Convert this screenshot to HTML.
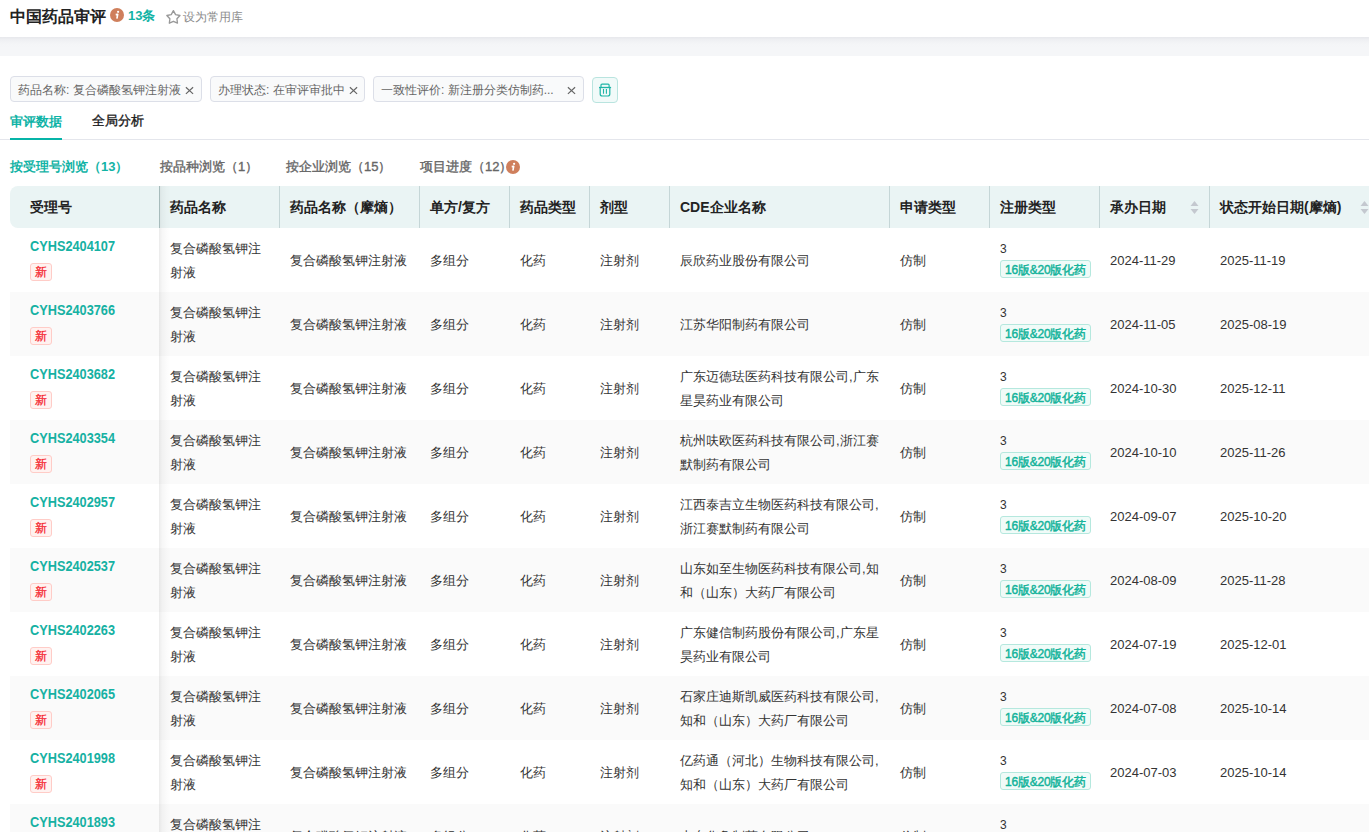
<!DOCTYPE html>
<html><head><meta charset="utf-8">
<style>
*{box-sizing:border-box;margin:0;padding:0}
html,body{width:1369px;height:832px;overflow:hidden;background:#fff}
body{font-family:"Liberation Sans",sans-serif;color:#333;position:relative}
.a{position:absolute;white-space:nowrap}
.band{position:absolute;left:0;top:37px;width:1369px;height:19px;background:linear-gradient(#e7e8ec 0px,#eff0f3 3px,#f4f5f7 7px,#f5f6f8 10px)}
.title{left:10px;top:6px;font-size:16px;font-weight:bold;color:#222;line-height:22px}
.info{width:14px;height:14px;border-radius:50%;background:#d08462;color:#fff;font-size:10px;font-style:italic;font-weight:bold;text-align:center;line-height:14px;font-family:"Liberation Serif",serif}
.cnt{left:128px;top:6px;font-size:13px;font-weight:bold;color:#12b3a5;line-height:20px}
.fav{left:183px;top:7px;font-size:12px;color:#8c8c8c;line-height:20px}
.tag{position:absolute;top:76px;height:26px;border:1px solid #dcdfe8;border-radius:4px;background:#f9fafb;font-size:12px;color:#666;line-height:27px;padding-left:7px;white-space:nowrap}
.tag .x{position:absolute;top:0;font-size:14px;color:#666}
.trash{position:absolute;left:592px;top:77px;width:26px;height:26px;border:1px solid #b9e4df;border-radius:4px;background:#f1faf9}
.tab{top:111px;font-size:13px;line-height:20px;font-weight:bold;color:#222}
.tabline{position:absolute;left:0;top:139px;width:1369px;height:1px;background:#e4e6ec}
.uline{position:absolute;left:10px;top:138px;width:52px;height:2px;background:#06b4a8}
.sub{top:157px;font-size:13px;line-height:20px;color:#666;-webkit-text-stroke:0.35px #666}
.sub.on{font-weight:bold;-webkit-text-stroke:0;color:#12b3a5}
.thead{position:absolute;left:10px;top:186px;width:1400px;height:42px;background:#eaf4f4;border-radius:8px 0 0 8px}
.th{top:196px;font-size:14px;font-weight:bold;color:#222;line-height:22px}
.vl{position:absolute;top:186px;width:1px;height:42px;background:#c5d6d7}
.row{position:absolute;left:10px;width:1400px;height:64px}
.row.g{background:#fafafa}
.shadow{position:absolute;left:159px;top:186px;width:12px;height:646px;background:linear-gradient(90deg,rgba(0,0,0,.08),rgba(0,0,0,.035) 3px,rgba(0,0,0,.01) 8px,rgba(0,0,0,0));}
.td{font-size:13px;color:#333;line-height:24px}
.id{font-size:14px;font-weight:bold;color:#16b1a3;line-height:20px;transform:scaleX(0.91);transform-origin:0 0}
.new{position:absolute;width:22px;height:18px;border:1px solid #ffccc7;border-radius:3px;background:#fff2f0;color:#f5222d;font-size:12px;line-height:16px;text-align:center;-webkit-text-stroke:0.25px #f5222d}
.reg{position:absolute;height:18px;width:91px;border:1px solid #b5e8de;border-radius:3px;background:#f0fbf8;color:#13b39a;font-size:12px;line-height:18px;padding-left:4px;letter-spacing:-0.2px;-webkit-text-stroke:0.45px #13b39a;white-space:nowrap}
.sort{position:absolute;top:200px;width:9px;height:15px}
</style></head><body>
<div class="a title">中国药品审评</div>
<svg class="a" style="left:110px;top:8px" width="14" height="14" viewBox="0 0 14 14"><circle cx="7" cy="7" r="7" fill="#cf7f5c"/><circle cx="8.1" cy="3.8" r="1.1" fill="#fff"/><path d="M5.7 6.6L7.7 6.4L6.9 10.7" stroke="#fff" stroke-width="1.6" fill="none" stroke-linejoin="round"/></svg>
<div class="a cnt">13条</div>
<svg class="a" style="left:165px;top:9px" width="17" height="17" viewBox="0 0 17 17"><path d="M8.40 1.70L10.57 5.61L14.96 6.47L11.92 9.74L12.46 14.18L8.40 12.30L4.34 14.18L4.88 9.74L1.84 6.47L6.23 5.61Z" fill="none" stroke="#999" stroke-width="1.35" stroke-linejoin="round"/></svg>
<div class="a fav">设为常用库</div>
<div class="band"></div>

<div class="tag" style="left:10px;width:192px">药品名称: 复合磷酸氢钾注射液</div>
<div class="tag" style="left:210px;width:155px">办理状态: 在审评审批中</div>
<div class="tag" style="left:373px;width:211px">一致性评价: 新注册分类仿制药...</div>
<div class="trash"><svg width="24" height="24" viewBox="0 0 24 24" style="position:absolute;left:0;top:0" fill="none" stroke="#1fb5a7"><path d="M8 9.3V7.1q0-1 1-1h6.1q1 0 1 1v2.2" stroke-width="1.2"/><path d="M6 9.5H18.1" stroke-width="1.3"/><path d="M7.2 9.5V16q0 2 2 2h5.6q2 0 2-2V9.5" stroke-width="1.2"/><path d="M10.5 11v4.8M13.4 11v4.8" stroke-width="1.1"/></svg></div>
<svg class="a" style="left:185px;top:86px" width="9" height="9" viewBox="0 0 9 9"><path d="M.9 1.2L8.1 7.9M8.1 1.2L.9 7.9" stroke="#666" stroke-width="1.2"/></svg>
<svg class="a" style="left:349px;top:86px" width="9" height="9" viewBox="0 0 9 9"><path d="M.9 1.2L8.1 7.9M8.1 1.2L.9 7.9" stroke="#666" stroke-width="1.2"/></svg>
<svg class="a" style="left:567px;top:86px" width="9" height="9" viewBox="0 0 9 9"><path d="M.9 1.2L8.1 7.9M8.1 1.2L.9 7.9" stroke="#666" stroke-width="1.2"/></svg>

<div class="a tab" style="left:10px;top:112px;color:#0fb3a6">审评数据</div>
<div class="a tab" style="left:92px;font-weight:normal;color:#1a1a1a;-webkit-text-stroke:0.35px #1a1a1a">全局分析</div>
<div class="tabline"></div>
<div class="uline"></div>

<div class="a sub on" style="left:10px">按受理号浏览（13）</div>
<div class="a sub" style="left:160px">按品种浏览（1）</div>
<div class="a sub" style="left:286px">按企业浏览（15）</div>
<div class="a sub" style="left:420px">项目进度（12）</div>
<svg class="a" style="left:506px;top:160px" width="14" height="14" viewBox="0 0 14 14"><circle cx="7" cy="7" r="7" fill="#cf7f5c"/><circle cx="8.1" cy="3.8" r="1.1" fill="#fff"/><path d="M5.7 6.6L7.7 6.4L6.9 10.7" stroke="#fff" stroke-width="1.6" fill="none" stroke-linejoin="round"/></svg>

<div class="thead"></div>
<div class="a th" style="left:30px">受理号</div>
<div class="a th" style="left:170px">药品名称</div>
<div class="a th" style="left:290px">药品名称（摩熵）</div>
<div class="a th" style="left:430px">单方/复方</div>
<div class="a th" style="left:520px">药品类型</div>
<div class="a th" style="left:600px">剂型</div>
<div class="a th" style="left:680px">CDE企业名称</div>
<div class="a th" style="left:900px">申请类型</div>
<div class="a th" style="left:1000px">注册类型</div>
<div class="a th" style="left:1110px">承办日期</div>
<div class="a th" style="left:1220px">状态开始日期(摩熵)</div>
<div class="vl" style="left:159px;background:#b3c9c9"></div>
<div class="vl" style="left:279px"></div>
<div class="vl" style="left:419px"></div>
<div class="vl" style="left:509px"></div>
<div class="vl" style="left:589px"></div>
<div class="vl" style="left:669px"></div>
<div class="vl" style="left:889px"></div>
<div class="vl" style="left:989px"></div>
<div class="vl" style="left:1099px"></div>
<div class="vl" style="left:1209px"></div>
<svg class="sort" style="left:1190px" viewBox="0 0 9 15"><path d="M4.5 1L8.5 6H.5z" fill="#c4c8cf"/><path d="M4.5 14L8.5 9H.5z" fill="#c4c8cf"/></svg>
<svg class="sort" style="left:1360px" viewBox="0 0 9 15"><path d="M4.5 1L8.5 6H.5z" fill="#c4c8cf"/><path d="M4.5 14L8.5 9H.5z" fill="#c4c8cf"/></svg>

<!--ROWS-->
<div class="row" style="top:228px"></div>
<div class="a id" style="left:30px;top:236px">CYHS2404107</div>
<div class="new" style="left:30px;top:263px">新</div>
<div class="a td" style="left:170px;top:237px">复合磷酸氢钾注<br>射液</div>
<div class="a td" style="left:290px;top:249px">复合磷酸氢钾注射液</div>
<div class="a td" style="left:430px;top:249px">多组分</div>
<div class="a td" style="left:520px;top:249px">化药</div>
<div class="a td" style="left:600px;top:249px">注射剂</div>
<div class="a td" style="left:680px;top:249px">辰欣药业股份有限公司</div>
<div class="a td" style="left:900px;top:249px">仿制</div>
<div class="a td" style="left:1000px;top:240px;font-size:12px;line-height:18px">3</div>
<div class="reg" style="left:1000px;top:260px">16版&amp;20版化药</div>
<div class="a td" style="left:1110px;top:249px">2024-11-29</div>
<div class="a td" style="left:1220px;top:249px">2025-11-19</div>
<div class="row g" style="top:292px"></div>
<div class="a id" style="left:30px;top:300px">CYHS2403766</div>
<div class="new" style="left:30px;top:327px">新</div>
<div class="a td" style="left:170px;top:301px">复合磷酸氢钾注<br>射液</div>
<div class="a td" style="left:290px;top:313px">复合磷酸氢钾注射液</div>
<div class="a td" style="left:430px;top:313px">多组分</div>
<div class="a td" style="left:520px;top:313px">化药</div>
<div class="a td" style="left:600px;top:313px">注射剂</div>
<div class="a td" style="left:680px;top:313px">江苏华阳制药有限公司</div>
<div class="a td" style="left:900px;top:313px">仿制</div>
<div class="a td" style="left:1000px;top:304px;font-size:12px;line-height:18px">3</div>
<div class="reg" style="left:1000px;top:324px">16版&amp;20版化药</div>
<div class="a td" style="left:1110px;top:313px">2024-11-05</div>
<div class="a td" style="left:1220px;top:313px">2025-08-19</div>
<div class="row" style="top:356px"></div>
<div class="a id" style="left:30px;top:364px">CYHS2403682</div>
<div class="new" style="left:30px;top:391px">新</div>
<div class="a td" style="left:170px;top:365px">复合磷酸氢钾注<br>射液</div>
<div class="a td" style="left:290px;top:377px">复合磷酸氢钾注射液</div>
<div class="a td" style="left:430px;top:377px">多组分</div>
<div class="a td" style="left:520px;top:377px">化药</div>
<div class="a td" style="left:600px;top:377px">注射剂</div>
<div class="a td" style="left:680px;top:365px">广东迈德珐医药科技有限公司,广东<br>星昊药业有限公司</div>
<div class="a td" style="left:900px;top:377px">仿制</div>
<div class="a td" style="left:1000px;top:368px;font-size:12px;line-height:18px">3</div>
<div class="reg" style="left:1000px;top:388px">16版&amp;20版化药</div>
<div class="a td" style="left:1110px;top:377px">2024-10-30</div>
<div class="a td" style="left:1220px;top:377px">2025-12-11</div>
<div class="row g" style="top:420px"></div>
<div class="a id" style="left:30px;top:428px">CYHS2403354</div>
<div class="new" style="left:30px;top:455px">新</div>
<div class="a td" style="left:170px;top:429px">复合磷酸氢钾注<br>射液</div>
<div class="a td" style="left:290px;top:441px">复合磷酸氢钾注射液</div>
<div class="a td" style="left:430px;top:441px">多组分</div>
<div class="a td" style="left:520px;top:441px">化药</div>
<div class="a td" style="left:600px;top:441px">注射剂</div>
<div class="a td" style="left:680px;top:429px">杭州呋欧医药科技有限公司,浙江赛<br>默制药有限公司</div>
<div class="a td" style="left:900px;top:441px">仿制</div>
<div class="a td" style="left:1000px;top:432px;font-size:12px;line-height:18px">3</div>
<div class="reg" style="left:1000px;top:452px">16版&amp;20版化药</div>
<div class="a td" style="left:1110px;top:441px">2024-10-10</div>
<div class="a td" style="left:1220px;top:441px">2025-11-26</div>
<div class="row" style="top:484px"></div>
<div class="a id" style="left:30px;top:492px">CYHS2402957</div>
<div class="new" style="left:30px;top:519px">新</div>
<div class="a td" style="left:170px;top:493px">复合磷酸氢钾注<br>射液</div>
<div class="a td" style="left:290px;top:505px">复合磷酸氢钾注射液</div>
<div class="a td" style="left:430px;top:505px">多组分</div>
<div class="a td" style="left:520px;top:505px">化药</div>
<div class="a td" style="left:600px;top:505px">注射剂</div>
<div class="a td" style="left:680px;top:493px">江西泰吉立生物医药科技有限公司,<br>浙江赛默制药有限公司</div>
<div class="a td" style="left:900px;top:505px">仿制</div>
<div class="a td" style="left:1000px;top:496px;font-size:12px;line-height:18px">3</div>
<div class="reg" style="left:1000px;top:516px">16版&amp;20版化药</div>
<div class="a td" style="left:1110px;top:505px">2024-09-07</div>
<div class="a td" style="left:1220px;top:505px">2025-10-20</div>
<div class="row g" style="top:548px"></div>
<div class="a id" style="left:30px;top:556px">CYHS2402537</div>
<div class="new" style="left:30px;top:583px">新</div>
<div class="a td" style="left:170px;top:557px">复合磷酸氢钾注<br>射液</div>
<div class="a td" style="left:290px;top:569px">复合磷酸氢钾注射液</div>
<div class="a td" style="left:430px;top:569px">多组分</div>
<div class="a td" style="left:520px;top:569px">化药</div>
<div class="a td" style="left:600px;top:569px">注射剂</div>
<div class="a td" style="left:680px;top:557px">山东如至生物医药科技有限公司,知<br>和（山东）大药厂有限公司</div>
<div class="a td" style="left:900px;top:569px">仿制</div>
<div class="a td" style="left:1000px;top:560px;font-size:12px;line-height:18px">3</div>
<div class="reg" style="left:1000px;top:580px">16版&amp;20版化药</div>
<div class="a td" style="left:1110px;top:569px">2024-08-09</div>
<div class="a td" style="left:1220px;top:569px">2025-11-28</div>
<div class="row" style="top:612px"></div>
<div class="a id" style="left:30px;top:620px">CYHS2402263</div>
<div class="new" style="left:30px;top:647px">新</div>
<div class="a td" style="left:170px;top:621px">复合磷酸氢钾注<br>射液</div>
<div class="a td" style="left:290px;top:633px">复合磷酸氢钾注射液</div>
<div class="a td" style="left:430px;top:633px">多组分</div>
<div class="a td" style="left:520px;top:633px">化药</div>
<div class="a td" style="left:600px;top:633px">注射剂</div>
<div class="a td" style="left:680px;top:621px">广东健信制药股份有限公司,广东星<br>昊药业有限公司</div>
<div class="a td" style="left:900px;top:633px">仿制</div>
<div class="a td" style="left:1000px;top:624px;font-size:12px;line-height:18px">3</div>
<div class="reg" style="left:1000px;top:644px">16版&amp;20版化药</div>
<div class="a td" style="left:1110px;top:633px">2024-07-19</div>
<div class="a td" style="left:1220px;top:633px">2025-12-01</div>
<div class="row g" style="top:676px"></div>
<div class="a id" style="left:30px;top:684px">CYHS2402065</div>
<div class="new" style="left:30px;top:711px">新</div>
<div class="a td" style="left:170px;top:685px">复合磷酸氢钾注<br>射液</div>
<div class="a td" style="left:290px;top:697px">复合磷酸氢钾注射液</div>
<div class="a td" style="left:430px;top:697px">多组分</div>
<div class="a td" style="left:520px;top:697px">化药</div>
<div class="a td" style="left:600px;top:697px">注射剂</div>
<div class="a td" style="left:680px;top:685px">石家庄迪斯凯威医药科技有限公司,<br>知和（山东）大药厂有限公司</div>
<div class="a td" style="left:900px;top:697px">仿制</div>
<div class="a td" style="left:1000px;top:688px;font-size:12px;line-height:18px">3</div>
<div class="reg" style="left:1000px;top:708px">16版&amp;20版化药</div>
<div class="a td" style="left:1110px;top:697px">2024-07-08</div>
<div class="a td" style="left:1220px;top:697px">2025-10-14</div>
<div class="row" style="top:740px"></div>
<div class="a id" style="left:30px;top:748px">CYHS2401998</div>
<div class="new" style="left:30px;top:775px">新</div>
<div class="a td" style="left:170px;top:749px">复合磷酸氢钾注<br>射液</div>
<div class="a td" style="left:290px;top:761px">复合磷酸氢钾注射液</div>
<div class="a td" style="left:430px;top:761px">多组分</div>
<div class="a td" style="left:520px;top:761px">化药</div>
<div class="a td" style="left:600px;top:761px">注射剂</div>
<div class="a td" style="left:680px;top:749px">亿药通（河北）生物科技有限公司,<br>知和（山东）大药厂有限公司</div>
<div class="a td" style="left:900px;top:761px">仿制</div>
<div class="a td" style="left:1000px;top:752px;font-size:12px;line-height:18px">3</div>
<div class="reg" style="left:1000px;top:772px">16版&amp;20版化药</div>
<div class="a td" style="left:1110px;top:761px">2024-07-03</div>
<div class="a td" style="left:1220px;top:761px">2025-10-14</div>
<div class="row g" style="top:804px"></div>
<div class="a id" style="left:30px;top:812px">CYHS2401893</div>
<div class="new" style="left:30px;top:839px">新</div>
<div class="a td" style="left:170px;top:813px">复合磷酸氢钾注<br>射液</div>
<div class="a td" style="left:290px;top:825px">复合磷酸氢钾注射液</div>
<div class="a td" style="left:430px;top:825px">多组分</div>
<div class="a td" style="left:520px;top:825px">化药</div>
<div class="a td" style="left:600px;top:825px">注射剂</div>
<div class="a td" style="left:680px;top:825px">山东华鲁制药有限公司</div>
<div class="a td" style="left:900px;top:825px">仿制</div>
<div class="a td" style="left:1000px;top:816px;font-size:12px;line-height:18px">3</div>
<div class="reg" style="left:1000px;top:836px">16版&amp;20版化药</div>
<div class="a td" style="left:1110px;top:825px">2024-06-28</div>
<div class="a td" style="left:1220px;top:825px">2025-10-14</div>
<div class="shadow"></div>
</body></html>
